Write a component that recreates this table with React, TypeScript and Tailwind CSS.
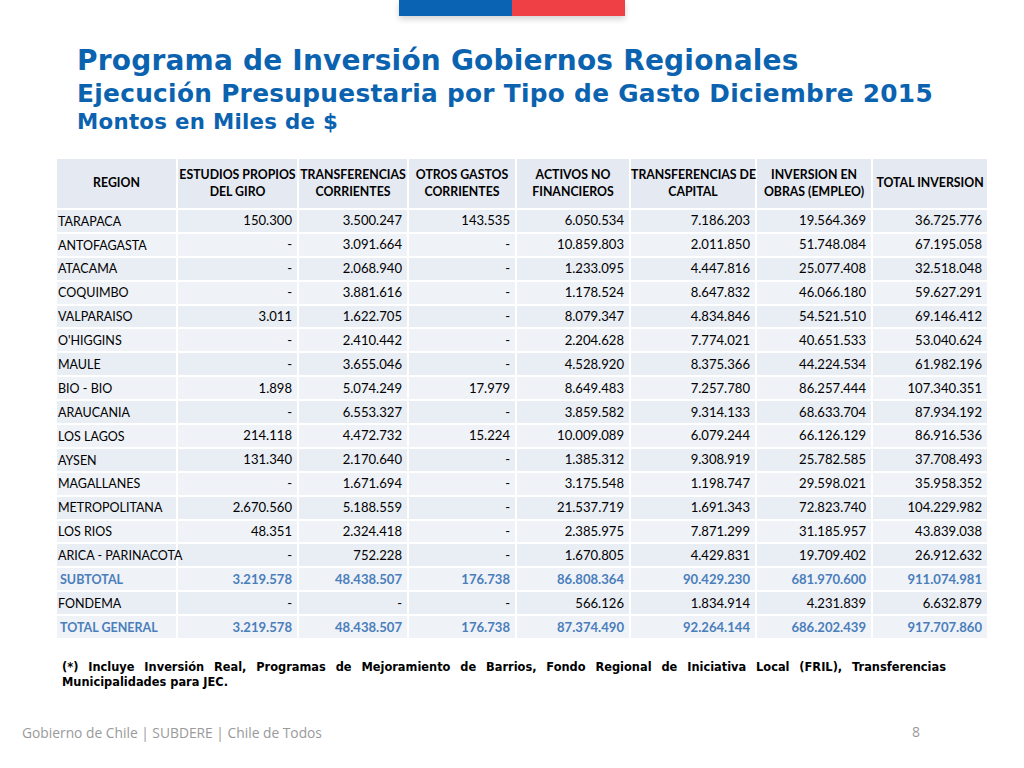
import React from "react";

type Row = { region: string; vals: string[]; total?: boolean };

const rows: Row[] = [
  { region: "TARAPACA", vals: ["150.300", "3.500.247", "143.535", "6.050.534", "7.186.203", "19.564.369", "36.725.776"] },
  { region: "ANTOFAGASTA", vals: ["-", "3.091.664", "-", "10.859.803", "2.011.850", "51.748.084", "67.195.058"] },
  { region: "ATACAMA", vals: ["-", "2.068.940", "-", "1.233.095", "4.447.816", "25.077.408", "32.518.048"] },
  { region: "COQUIMBO", vals: ["-", "3.881.616", "-", "1.178.524", "8.647.832", "46.066.180", "59.627.291"] },
  { region: "VALPARAISO", vals: ["3.011", "1.622.705", "-", "8.079.347", "4.834.846", "54.521.510", "69.146.412"] },
  { region: "O'HIGGINS", vals: ["-", "2.410.442", "-", "2.204.628", "7.774.021", "40.651.533", "53.040.624"] },
  { region: "MAULE", vals: ["-", "3.655.046", "-", "4.528.920", "8.375.366", "44.224.534", "61.982.196"] },
  { region: "BIO - BIO", vals: ["1.898", "5.074.249", "17.979", "8.649.483", "7.257.780", "86.257.444", "107.340.351"] },
  { region: "ARAUCANIA", vals: ["-", "6.553.327", "-", "3.859.582", "9.314.133", "68.633.704", "87.934.192"] },
  { region: "LOS LAGOS", vals: ["214.118", "4.472.732", "15.224", "10.009.089", "6.079.244", "66.126.129", "86.916.536"] },
  { region: "AYSEN", vals: ["131.340", "2.170.640", "-", "1.385.312", "9.308.919", "25.782.585", "37.708.493"] },
  { region: "MAGALLANES", vals: ["-", "1.671.694", "-", "3.175.548", "1.198.747", "29.598.021", "35.958.352"] },
  { region: "METROPOLITANA", vals: ["2.670.560", "5.188.559", "-", "21.537.719", "1.691.343", "72.823.740", "104.229.982"] },
  { region: "LOS RIOS", vals: ["48.351", "2.324.418", "-", "2.385.975", "7.871.299", "31.185.957", "43.839.038"] },
  { region: "ARICA - PARINACOTA", vals: ["-", "752.228", "-", "1.670.805", "4.429.831", "19.709.402", "26.912.632"] },
  { region: "SUBTOTAL", total: true, vals: ["3.219.578", "48.438.507", "176.738", "86.808.364", "90.429.230", "681.970.600", "911.074.981"] },
  { region: "FONDEMA", vals: ["-", "-", "-", "566.126", "1.834.914", "4.231.839", "6.632.879"] },
  { region: "TOTAL GENERAL", total: true, vals: ["3.219.578", "48.438.507", "176.738", "87.374.490", "92.264.144", "686.202.439", "917.707.860"] },
];

const headers = [
  ["REGION"],
  ["ESTUDIOS PROPIOS", "DEL GIRO"],
  ["TRANSFERENCIAS", "CORRIENTES"],
  ["OTROS GASTOS", "CORRIENTES"],
  ["ACTIVOS NO", "FINANCIEROS"],
  ["TRANSFERENCIAS DE", "CAPITAL"],
  ["INVERSION EN", "OBRAS (EMPLEO)"],
  ["TOTAL INVERSION"],
];

const widths = [121, 121, 110, 108, 114, 126, 116, 116];

export default function App() {
  return (
    <div className="w-[1024px] h-[768px] bg-white relative overflow-hidden font-['Lato',sans-serif]">
      {/* flag bar */}
      <div className="flex justify-center">
        <div className="flex shadow-[0_3px_6px_rgba(0,0,0,0.18)]">
          <div className="w-[113px] h-[16px] bg-[#0b63b4]" />
          <div className="w-[113px] h-[16px] bg-[#ef4046]" />
        </div>
      </div>

      <div className="pl-[77px] pt-[27px] text-[#0b63b0] font-['DejaVu_Sans',sans-serif] font-bold">
        <div className="text-[28px] leading-[36px] tracking-[0.2px]">Programa de Inversión Gobiernos Regionales</div>
        <div className="text-[24.8px] leading-[29px] tracking-[0.3px]">Ejecución Presupuestaria por Tipo de Gasto Diciembre 2015</div>
        <div className="text-[21.3px] leading-[27px] tracking-[0.3px]">Montos en Miles de $</div>
      </div>

      <div className="pl-[55px] pt-[22px]">
        <table className="w-[932px] border-collapse table-fixed text-[12.5px] text-black">
          <colgroup>
            {widths.map((w, i) => (
              <col key={i} style={{ width: w }} />
            ))}
          </colgroup>
          <thead>
            <tr className="h-[51px] bg-[#e5e9f1]">
              {headers.map((h, i) => (
                <th key={i} className="border-2 border-white font-bold text-[12.3px] leading-[16.5px] text-center px-0 whitespace-nowrap">
                  {h.map((l, j) => (
                    <div key={j}>{l}</div>
                  ))}
                </th>
              ))}
            </tr>
          </thead>
          <tbody>
            {rows.map((r, i) => (
              <tr key={i} className={`h-[23.9px] ${i % 2 === 0 ? "bg-[#e9edf4]" : "bg-[#eff2f7]"}`}>
                <td
                  className={`border-2 border-white whitespace-nowrap leading-none pt-[2px] ${
                    r.total ? "pl-[3px] font-bold text-[#4a7ebb]" : "pl-px"
                  }`}
                >
                  {r.region}
                </td>
                {r.vals.map((v, j) => (
                  <td
                    key={j}
                    className={`border-2 border-white text-right pr-[5px] whitespace-nowrap leading-none text-[13.1px] ${
                      r.total ? "font-bold text-[#4a7ebb]" : ""
                    }`}
                  >
                    {v}
                  </td>
                ))}
              </tr>
            ))}
          </tbody>
        </table>
      </div>

      <p className="ml-[62px] mt-[20px] w-[884px] text-justify [text-align-last:left] text-[11.4px] leading-[15px] font-bold text-black font-['DejaVu_Sans',sans-serif]">
        (*) Incluye Inversión Real, Programas de Mejoramiento de Barrios, Fondo Regional de Iniciativa Local (FRIL), Transferencias Municipalidades para JEC.
      </p>

      <div className="absolute left-[22px] top-[723px] text-[13.8px] text-[#9a9a9a] font-['Open_Sans',sans-serif]">
        Gobierno de Chile | SUBDERE | Chile de Todos
      </div>
      <div className="absolute left-[912px] top-[721px] text-[14px] text-[#9a9a9a] font-['Open_Sans',sans-serif]">8</div>
    </div>
  );
}
